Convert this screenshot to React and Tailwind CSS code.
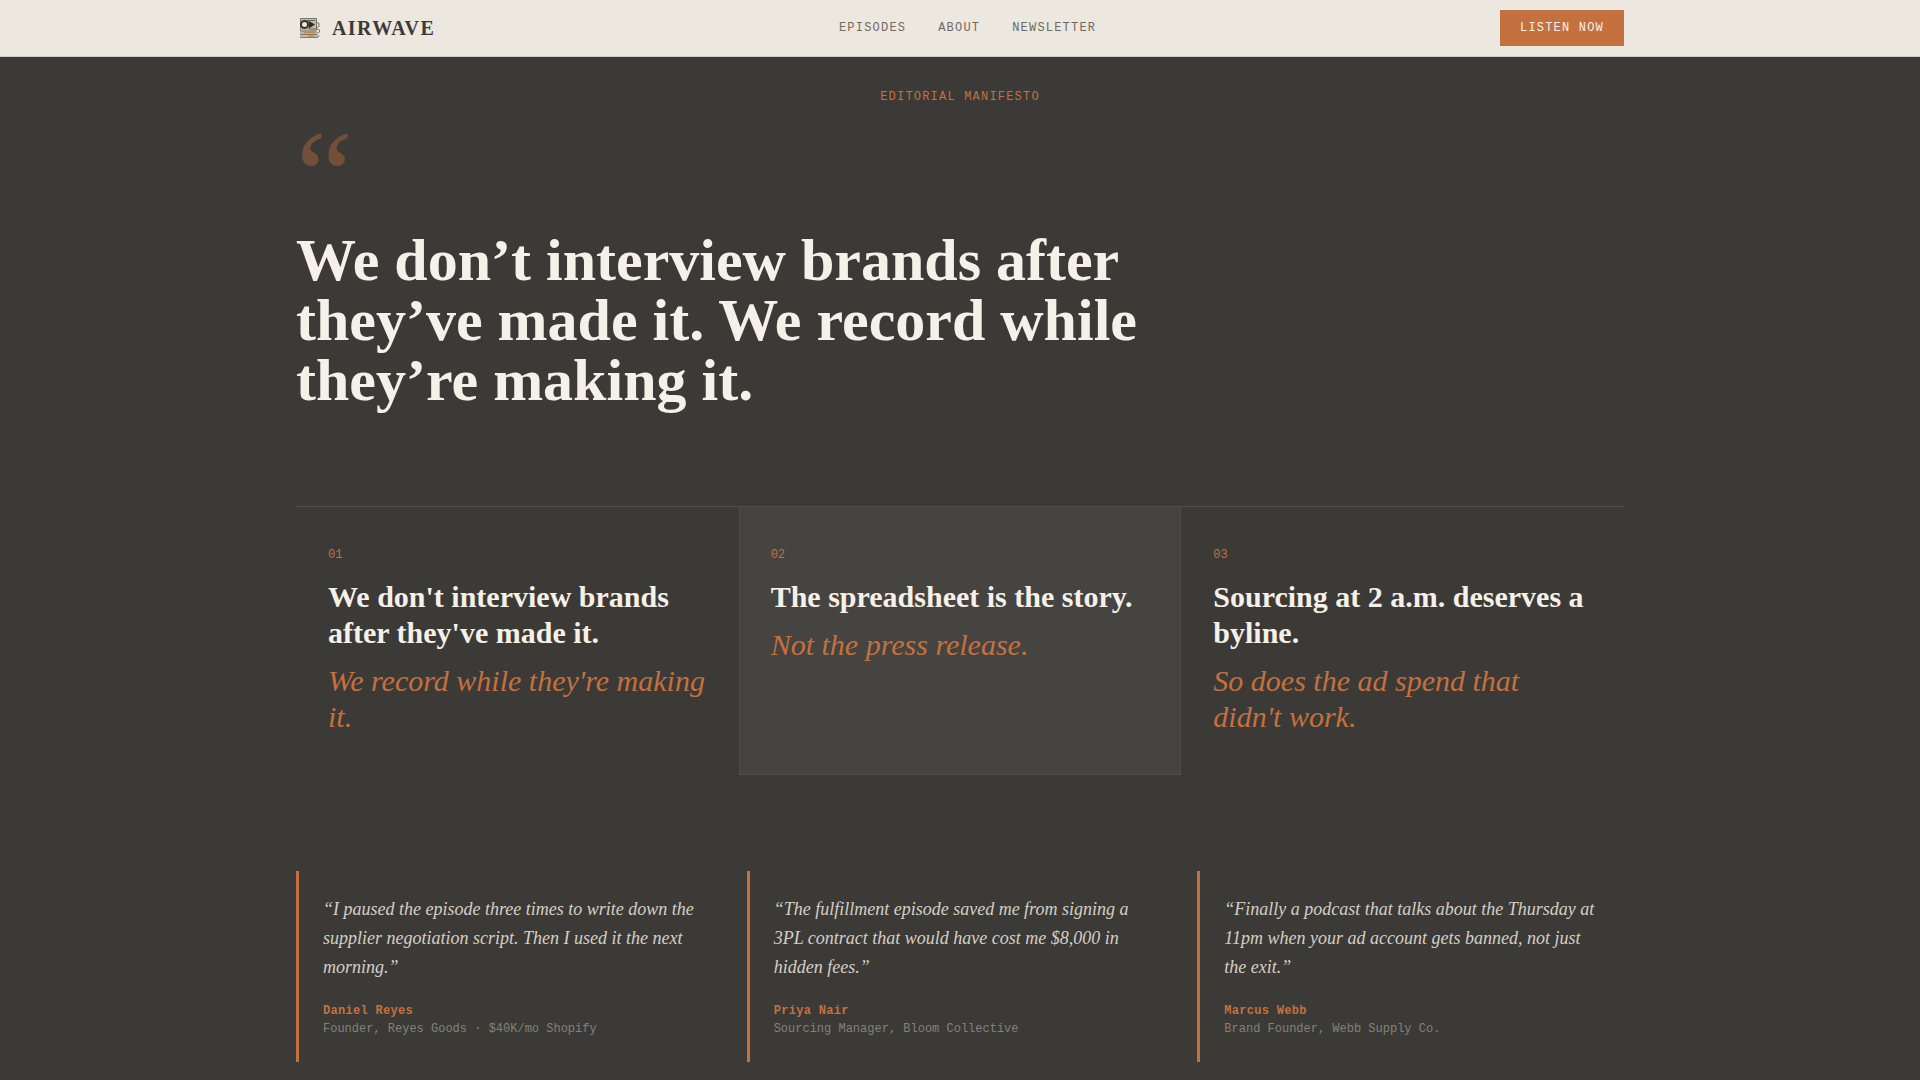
import React from 'react'

const navLinks = ['Episodes', 'About', 'Newsletter']

const principles = [
  {
    number: '01',
    title: "We don't interview brands after they've made it.",
    followUp: "We record while they're making it."
  },
  {
    number: '02',
    title: 'The spreadsheet is the story.',
    followUp: 'Not the press release.',
    highlighted: true
  },
  {
    number: '03',
    title: 'Sourcing at 2 a.m. deserves a byline.',
    followUp: "So does the ad spend that didn't work."
  }
]

const testimonials = [
  {
    quote: 'I paused the episode three times to write down the supplier negotiation script. Then I used it the next morning.',
    name: 'Daniel Reyes',
    role: 'Founder, Reyes Goods · $40K/mo Shopify'
  },
  {
    quote: 'The fulfillment episode saved me from signing a 3PL contract that would have cost me $8,000 in hidden fees.',
    name: 'Priya Nair',
    role: 'Sourcing Manager, Bloom Collective'
  },
  {
    quote: 'Finally a podcast that talks about the Thursday at 11pm when your ad account gets banned, not just the exit.',
    name: 'Marcus Webb',
    role: 'Brand Founder, Webb Supply Co.'
  }
]

const Logo = () => (
  <svg width="28" height="28" viewBox="0 0 28 28" aria-hidden="true">
    <rect x="4" y="4" width="17" height="20" rx="1" fill="#c3b8a3" />
    <path d="M4.5 16V4.5h16V16" fill="none" stroke="#7d7667" strokeWidth="1" />
    <path d="M4 17h16M4 20.5h17M4 23.5h18" stroke="#857b68" strokeWidth="1" />
    <path d="M21 8.5l2 1v3l-2 1M21 15l2.5 1v2L21 19.5M21 22h2.5" fill="none" stroke="#77705f" strokeWidth="1" />
    <path d="M8 18.5h12M12 22h6" stroke="#b98d5e" strokeWidth="1.5" />
    <path d="M11 6.5h8M13 15h7" stroke="#6d675b" strokeWidth="1" />
    <circle cx="8.5" cy="10.5" r="3.5" fill="#ece7df" stroke="#33322f" strokeWidth="2" />
    <path d="M12 6.5l7 4-7 4.5c1.5-2.5 1.5-6 0-8.5z" fill="#2b2a28" />
  </svg>
)

const Header = () => (
  <header className="bg-[#ece7df] border-b border-[#d0cdc4]">
    <div className="max-w-[1440px] mx-auto px-14 h-14 flex items-center justify-between">
      <a href="#" className="flex items-center gap-2">
        <Logo />
        <span className="font-['Liberation_Serif',serif] font-bold text-xl tracking-[0.07em] text-[#3c3a36]">AIRWAVE</span>
      </a>
      <nav className="flex items-center gap-8">
        {navLinks.map((link) => (
          <a key={link} href={`#${link.toLowerCase()}`} className="text-xs uppercase tracking-widest text-[#6f6b64]">
            {link}
          </a>
        ))}
      </nav>
      <button className="bg-[#c4703f] text-[#f5f0e8] text-xs uppercase tracking-widest px-5 py-2.5">
        Listen Now
      </button>
    </div>
  </header>
)

// The highlighted card sits over the section's top rule
const Principle = ({ number, title, followUp, highlighted }) => (
  <article className={`px-8 pb-10 ${highlighted ? '-mt-px pt-[41px] bg-[#454440] inset-ring-1 inset-ring-[#4f4d49]' : 'pt-10'}`}>
    <p className="text-xs text-[#c4703f] mb-4">{number}</p>
    <h3 className="font-['Liberation_Serif',serif] font-bold text-3xl leading-9 text-[#f5f0e8] mb-3">{title}</h3>
    <p className="font-['Liberation_Serif',serif] italic text-3xl leading-9 text-[#c4703f]">{followUp}</p>
  </article>
)

const Testimonial = ({ quote, name, role }) => (
  <figure className="border-l-3 border-[#c4703f] p-6">
    <blockquote className="font-['Liberation_Serif',serif] italic text-lg leading-[29px] text-[#d4cfc6]">
      {`“${quote}”`}
    </blockquote>
    <figcaption className="mt-5 text-xs leading-[18px]">
      <p className="font-bold tracking-wide text-[#c4703f]">{name}</p>
      <p className="text-[#83817c]">{role}</p>
    </figcaption>
  </figure>
)

const App = () => {
  return (
    <div className="min-h-screen bg-[#3c3a36] font-['Liberation_Mono',monospace]">
      <Header />
      <main className="max-w-[1440px] mx-auto px-14 pt-8">
        {/* Manifesto */}
        <p className="text-xs uppercase tracking-widest text-center text-[#c4703f]">Editorial Manifesto</p>
        <div className="font-['Liberation_Serif',serif] text-9xl leading-[109px] text-[#c4703f]/40 mt-4" aria-hidden="true">“</div>
        <h1 className="font-['Liberation_Serif',serif] font-bold text-6xl leading-[60px] text-[#f5f0e8] max-w-4xl">
          We don’t interview brands after they’ve made it. We record while they’re making it.
        </h1>

        {/* Principles */}
        <section className="grid grid-cols-3 border-t border-[#4f4d49] mt-24">
          {principles.map((item) => (
            <Principle key={item.number} {...item} />
          ))}
        </section>

        {/* Testimonials */}
        <section className="grid grid-cols-3 gap-6 mt-24 pb-5">
          {testimonials.map((item) => (
            <Testimonial key={item.name} {...item} />
          ))}
        </section>
      </main>
    </div>
  )
}

export default App
